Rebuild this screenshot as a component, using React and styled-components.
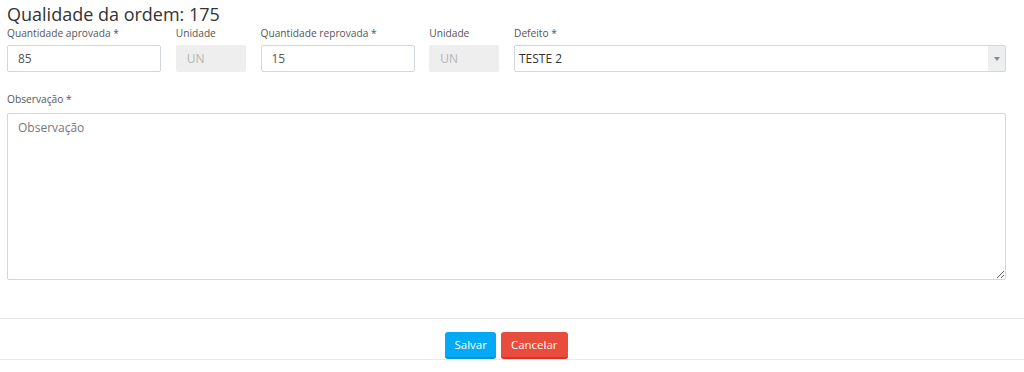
import React from 'react';
import styled, { createGlobalStyle } from 'styled-components';

const GlobalStyle = createGlobalStyle`
  body {
    margin: 0;
    background: #fff;
    font-family: "Open Sans", "Liberation Sans", sans-serif;
    color: #333;
  }
`;

const Modal = styled.div`
  width: 1024px;
  box-sizing: border-box;
  border-bottom: 1px solid #e8e8e8;
`;

const Body = styled.div`
  padding: 2px 18px 0 7px;
`;

const Title = styled.h4`
  margin: 0;
  font-size: 18px;
  line-height: 24px;
  font-weight: 400;
  color: #333;
`;

const Row = styled.div`
  display: grid;
  grid-template-columns: 154px 70px 154px 70px 1fr;
  column-gap: 14.75px;
`;

const Group = styled.div`
  display: flex;
  flex-direction: column;
  margin-top: ${({ top }) => top || 0}px;
`;

const Label = styled.label`
  font-size: 10.2px;
  line-height: 15px;
  color: #555;
  margin-bottom: ${({ gap }) => gap || 4}px;
`;

const Input = styled.input`
  box-sizing: border-box;
  height: 27px;
  width: 100%;
  padding: 0 10px;
  border: 1px solid ${({ disabled }) => (disabled ? '#eeeeee' : '#d2d6de')};
  background: ${({ disabled }) => (disabled ? '#eeeeee' : '#fff')};
  color: ${({ disabled }) => (disabled ? '#b5b5b5' : '#555')};
  font: 12px "Open Sans", "Liberation Sans", sans-serif;
  border-radius: 2px;
  outline: none;
  &:disabled { -webkit-text-fill-color: #b5b5b5; opacity: 1; }
`;

const Select = styled.div`
  box-sizing: border-box;
  height: 27px;
  display: flex;
  border: 1px solid #d2d6de;
  border-radius: 2px;
  background: #eceef0;
`;

const SelectValue = styled.div`
  flex: 1;
  background: #fff;
  font-size: 12px;
  line-height: 25px;
  padding-left: 4px;
  color: #333;
`;

const Arrow = styled.div`
  width: 17px;
  display: flex;
  align-items: center;
  justify-content: center;
  &::after {
    content: '';
    border-left: 3px solid transparent;
    border-right: 3px solid transparent;
    border-top: 4px solid #888;
  }
`;

const TextArea = styled.textarea`
  box-sizing: border-box;
  display: block;
  width: 100%;
  height: 167px;
  padding: 6px 10px;
  border: 1px solid #d2d6de;
  border-radius: 2px;
  font: 12px/16px "Open Sans", "Liberation Sans", sans-serif;
  color: #555;
  resize: vertical;
  outline: none;
  &::placeholder { color: #777; }
`;

const Footer = styled.div`
  margin-top: 38px;
  border-top: 1px solid #e8e8e8;
  padding: 13px 18px 0 7px;
  display: flex;
  justify-content: center;
  gap: 5px;
`;

const Button = styled.button`
  height: 27px;
  padding: 0 ${({ wide }) => (wide ? 10 : 9)}px;
  border: none;
  border-radius: 3px;
  border-bottom: 2px solid ${({ variant }) => (variant === 'danger' ? '#d9312a' : '#0a8fd0')};
  background: ${({ variant }) => (variant === 'danger' ? '#e74c3c' : '#03a9f4')};
  color: #fff;
  font: 11.5px "Open Sans", "Liberation Sans", sans-serif;
  line-height: 25px;
  cursor: pointer;
`;

export default function App() {
  return (
    <>
      <GlobalStyle />
      <Modal>
        <Body>
          <Title>Qualidade da ordem: 175</Title>
          <Row>
            <Group>
              <Label>Quantidade aprovada *</Label>
              <Input defaultValue="85" />
            </Group>
            <Group>
              <Label>Unidade</Label>
              <Input value="UN" disabled readOnly />
            </Group>
            <Group>
              <Label>Quantidade reprovada *</Label>
              <Input defaultValue="15" />
            </Group>
            <Group>
              <Label>Unidade</Label>
              <Input value="UN" disabled readOnly />
            </Group>
            <Group>
              <Label>Defeito *</Label>
              <Select>
                <SelectValue>TESTE 2</SelectValue>
                <Arrow />
              </Select>
            </Group>
          </Row>
          <Group top={20}>
            <Label gap={6}>Observação *</Label>
            <TextArea placeholder="Observação" />
          </Group>
        </Body>
        <Footer>
          <Button>Salvar</Button>
          <Button variant="danger" wide>Cancelar</Button>
        </Footer>
      </Modal>
    </>
  );
}
